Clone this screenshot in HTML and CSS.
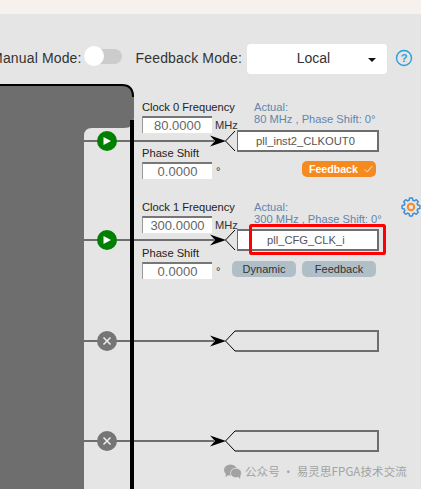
FILE: index.html
```html
<!DOCTYPE html>
<html lang="en">
<head>
<meta charset="utf-8">
<title>PLL clock configuration</title>
<link rel="stylesheet" href="styles.css">
</head>
<body>
<div class="strip"></div>
<header class="toolbar">
  <span class="tool-label">Manual Mode:</span>
  <span class="toggle"><span class="knob"></span></span>
  <span class="tool-label feedback-label">Feedback Mode:</span>
  <div class="select"><span class="select-value">Local</span><span class="caret"></span></div>
  <svg class="help" width="18" height="18" viewBox="0 0 18 18"><circle cx="9" cy="9" r="7.5"/><text x="9" y="13" text-anchor="middle">?</text></svg>
</header>
<main class="canvas">
  <svg class="diagram" width="421" height="405" viewBox="0 84 421 405">
    <path class="block" d="M0 85H122Q134 85 134 97V118Q134 128 124 128H92Q84 128 84 136V489H0Z"/>
    <path class="block-edge" d="M0 85H122Q133 85 133 97"/>
    <rect class="rail" x="130" y="120" width="4" height="369"/>
    <g class="wire">
      <path d="M84 141H130M134 141H214"/><path d="M84 240H130M134 240H214"/><path d="M84 341H130M134 341H214"/><path d="M84 441H130M134 441H214"/>
    </g>
    <g class="arrows">
      <path d="M226 141L210 135.500L215 141L210 146.500Z"/><path d="M226 240L210 234.500L215 240L210 245.500Z"/><path d="M226 341L210 335.500L215 341L210 346.500Z"/><path d="M226 441L210 435.500L215 441L210 446.500Z"/>
    </g>
    <g class="pin-tip">
      <path d="M235 131L225.500 141L235 151"/><path d="M235 230L225.500 240L235 250"/><path d="M235 331L225.500 341L235 351"/><path d="M235 431L225.500 441L235 451"/>
    </g>
    <rect class="pin-on" x="237.500" y="131.500" width="140" height="19"/>
    <rect class="pin-on" x="237.500" y="230.500" width="140" height="19"/>
    <path class="pin-edge" d="M237 131H378V151H237M237 230H378V250H237"/>
    <path class="pin-edge" d="M235 331H378V351H235M235 431H378V451H235"/>
    <text class="pin-text" x="256" y="145">pll_inst2_CLKOUT0</text>
    <text class="pin-text" x="267" y="244">pll_CFG_CLK_i</text>
    <rect class="highlight" x="250.500" y="225.500" width="134" height="28" rx="1"/>
    <g class="state-on">
      <circle cx="107" cy="141" r="10"/><path d="M103.500 137L111 141L103.500 145Z"/>
      <circle cx="107" cy="240" r="10"/><path d="M103.500 236L111 240L103.500 244Z"/>
    </g>
    <g class="state-off">
      <circle cx="107" cy="341" r="10"/><path d="M103.500 337.500L110.500 344.500M110.500 337.500L103.500 344.500"/>
      <circle cx="107" cy="441" r="10"/><path d="M103.500 437.500L110.500 444.500M110.500 437.500L103.500 444.500"/>
    </g>
    <g class="gear" transform="translate(411 207)">
      <path class="gear-body" d="M6.730-1.930L8.890-1.410L8.890 1.410L6.730 1.930L6.120 3.390L7.280 5.290L5.290 7.280L3.390 6.120L1.930 6.730L1.410 8.890L-1.410 8.890L-1.930 6.730L-3.390 6.120L-5.290 7.280L-7.280 5.290L-6.120 3.390L-6.730 1.930L-8.890 1.410L-8.890-1.410L-6.730-1.930L-6.120-3.390L-7.280-5.290L-5.290-7.280L-3.390-6.120L-1.930-6.730L-1.410-8.890L1.410-8.890L1.930-6.730L3.390-6.120L5.290-7.280L7.280-5.290L6.120-3.390Z"/>
      <circle class="gear-core" r="3.200"/>
    </g>
    <g class="wechat">
      <ellipse cx="230.500" cy="470" rx="6.500" ry="5.500"/><path d="M226 473L225.500 477L230 474Z"/>
      <ellipse class="wechat-front" cx="236" cy="473" rx="5.500" ry="4.800"/><path d="M238 476L240 479L240.500 475Z"/>
    </g>
  </svg>

  <section class="clock clock-0">
    <label class="field-label">Clock 0 Frequency</label>
    <div class="field-row"><span class="num">80.0000</span><span class="unit">MHz</span></div>
    <label class="field-label phase-label">Phase Shift</label>
    <div class="field-row"><span class="num">0.0000</span><span class="unit degree">°</span></div>
  </section>
  <p class="actual actual-0">Actual:<br>80 MHz , Phase Shift: 0°</p>
  <span class="chip chip-on chip-0">Feedback <svg class="check" width="9" height="8" viewBox="0 0 11 9"><path d="M1 5L4 8L10 1"/></svg></span>

  <section class="clock clock-1">
    <label class="field-label">Clock 1 Frequency</label>
    <div class="field-row"><span class="num">300.0000</span><span class="unit">MHz</span></div>
    <label class="field-label phase-label">Phase Shift</label>
    <div class="field-row"><span class="num">0.0000</span><span class="unit degree">°</span></div>
  </section>
  <p class="actual actual-1">Actual:<br>300 MHz , Phase Shift: 0°</p>
  <div class="chips chips-1">
    <span class="chip chip-dynamic">Dynamic</span>
    <span class="chip chip-feedback">Feedback</span>
  </div>

  <footer class="watermark">公众号 · 易灵思FPGA技术交流</footer>
</main>
</body>
</html>
```
FILE: styles.css
```css
* { box-sizing: border-box; }
html, body { margin: 0; padding: 0; }
body {
  width: 421px;
  height: 489px;
  overflow: hidden;
  background: #e5e5e5;
  font-family: "Liberation Sans", Arial, sans-serif;
  color: #333;
}
.strip { height: 14px; background: #f6f1ec; }

.toolbar {
  height: 70px;
  display: flex;
  align-items: center;
  justify-content: flex-end;
  padding: 20px 8px 0 0;
}
.tool-label { font-size: 14px; letter-spacing: 0.150px; white-space: nowrap; margin-bottom: 3px; }
.toggle {
  position: relative;
  flex: none;
  width: 38px;
  height: 15px;
  margin: 0 0 5px 2px;
  border-radius: 8px;
  background: #ccc;
}
.knob {
  position: absolute;
  left: 0;
  top: -3px;
  width: 20px;
  height: 20px;
  border-radius: 50%;
  background: #fff;
}
.feedback-label { margin-left: 14px; }
.select {
  position: relative;
  flex: none;
  width: 140px;
  height: 30px;
  margin-left: 5px;
  padding-right: 7px;
  background: #fff;
  border-radius: 4px;
  font-size: 14px;
  line-height: 28px;
  text-align: center;
}
.caret {
  position: absolute;
  right: 11px;
  top: 14px;
  border-left: 4px solid transparent;
  border-right: 4px solid transparent;
  border-top: 4px solid #111;
}
.help { flex: none; margin: 0 0 2px 8px; fill: none; stroke: #2a9fd6; stroke-width: 1.4; }
.help text { fill: #2a9fd6; stroke: none; font: bold 11px "Liberation Sans", sans-serif; }

.canvas { position: relative; height: 405px; }
.diagram { position: absolute; left: 0; top: 0; display: block; }
.block { fill: #6e6e6e; }
.block-edge { fill: none; stroke: #000; stroke-width: 2; }
.rail { fill: #000; }
.wire { fill: none; stroke: #6e6e6e; stroke-width: 2; }
.arrows { fill: #000; }
.pin-tip { fill: none; stroke: #000; stroke-width: 1; }
.pin-on { fill: #fff; stroke: #6e6e6e; stroke-width: 1; }
.pin-edge { fill: none; stroke: #6e6e6e; stroke-width: 2; }
.pin-text { font-size: 11.200px; fill: #555; }
.highlight { fill: none; stroke: #f00; stroke-width: 3; }
.state-on circle { fill: #008000; }
.state-on path { fill: #fff; }
.state-off circle { fill: #757575; }
.state-off path { fill: none; stroke: #eee; stroke-width: 1.500; }
.gear { fill: none; }
.gear-body { stroke: #3d8fd6; stroke-width: 1.500; stroke-linejoin: round; }
.gear-core { stroke: #f58b1f; stroke-width: 2; }
.wechat { fill: #a2a2a2; }
.wechat-front { stroke: #e5e5e5; stroke-width: 0.800; }

.clock { position: absolute; left: 142px; width: 90px; }
.clock-0 { top: 16px; }
.clock-1 { top: 116px; }
.field-label { display: block; height: 16px; font-size: 11.150px; line-height: 15px; color: #222; white-space: nowrap; }
.phase-label { margin-top: 13px; }
.field-row { display: flex; align-items: center; height: 17px; }
.num {
  flex: none;
  width: 70px;
  height: 17px;
  background: #fff;
  border-top: 2px solid #777;
  border-left: 1px solid #999;
  color: #666;
  font-size: 13px;
  line-height: 15px;
  text-align: center;
}
.unit { margin-left: 3px; font-size: 11.150px; color: #333; }
.degree { margin-left: 4px; }

.actual {
  position: absolute;
  left: 254px;
  margin: 0;
  font-size: 11.150px;
  line-height: 12px;
  color: #6285ac;
  white-space: nowrap;
}
.actual-0 { top: 17px; }
.actual-1 { top: 117px; }

.chip {
  display: flex;
  align-items: center;
  justify-content: center;
  height: 16px;
  border-radius: 5px;
  font-size: 11px;
}
.chip-on {
  position: absolute;
  left: 302px;
  top: 77px;
  width: 74px;
  padding-left: 7px;
  justify-content: flex-start;
  gap: 6px;
  background: #f58b1f;
  color: #fff;
  font-size: 10.600px;
  font-weight: bold;
}
.check { flex: none; fill: none; stroke: #fff; stroke-width: 1; }
.chips {
  position: absolute;
  left: 232px;
  top: 177px;
  display: flex;
  gap: 6px;
}
.chip-dynamic { width: 64px; background: #b0bec8; }
.chip-feedback { width: 74px; background: #b0bec8; }

.watermark {
  position: absolute;
  left: 245px;
  top: 379px;
  font-family: "Noto Sans CJK SC", sans-serif;
  font-size: 11.500px;
  line-height: 16px;
  letter-spacing: 0.100px;
  color: #a2a2a2;
  white-space: nowrap;
}
```
